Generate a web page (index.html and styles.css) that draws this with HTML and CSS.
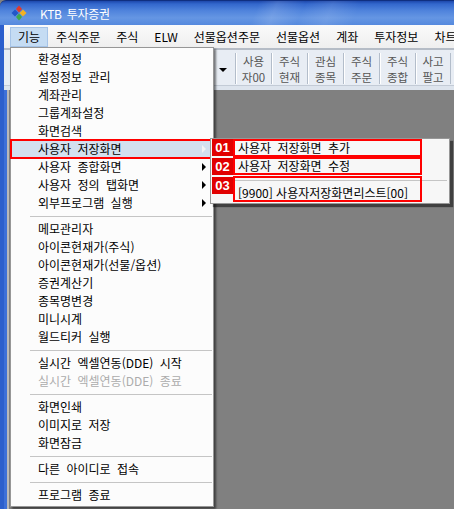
FILE: index.html
```html
<!DOCTYPE html>
<html lang="ko">
<head>
    <meta charset="UTF-8">
    <title>KTB 투자증권</title>
    <link rel="stylesheet" href="styles.css">
</head>
<body>
<div class="window">
    <div class="titlebar">
        <svg class="logo" width="16" height="16" viewBox="0 0 16 16">
            <polygon points="8,0.5 11,4 8,7.5 5,4" fill="#e2392c"/>
            <polygon points="0.5,8 4,4.5 7.5,8 4,11.5" fill="#2257c8"/>
            <polygon points="8.5,8 12,4.5 15.5,8 12,11.5" fill="#f4b223"/>
            <polygon points="8,8.5 11,12 8,15.5 5,12" fill="#3ea84b"/>
        </svg>
        <span class="title">KTB 투자증권</span>
    </div>

    <div class="frame">
        <div class="menubar">
            <span class="menu-top open">기능</span>
            <span class="menu-top">주식주문</span>
            <span class="menu-top">주식</span>
            <span class="menu-top">ELW</span>
            <span class="menu-top">선물옵션주문</span>
            <span class="menu-top">선물옵션</span>
            <span class="menu-top">계좌</span>
            <span class="menu-top">투자정보</span>
            <span class="menu-top">차트</span>
        </div>

        <div class="toolbar">
            <div class="tb-hidden"><span class="drop-arrow"></span></div>
            <div class="tb-btn"><span>사용</span><span>자00</span></div>
            <div class="tb-btn"><span>주식</span><span>현재</span></div>
            <div class="tb-btn"><span>관심</span><span>종목</span></div>
            <div class="tb-btn"><span>주식</span><span>주문</span></div>
            <div class="tb-btn"><span>주식</span><span>종합</span></div>
            <div class="tb-btn"><span>사고</span><span>팔고</span></div>
        </div>
        <div class="tb-strip"></div>

        <div class="mdi"></div>
    </div>

    <!-- 기능 menu, opened -->
    <div class="dropdown">
        <div class="item">환경설정</div>
        <div class="item">설정정보 관리</div>
        <div class="item">계좌관리</div>
        <div class="item">그룹계좌설정</div>
        <div class="item">화면검색</div>
        <div class="item selected">사용자 저장화면 <span class="arrow"></span></div>
        <div class="item">사용자 종합화면 <span class="arrow"></span></div>
        <div class="item">사용자 정의 탭화면 <span class="arrow"></span></div>
        <div class="item">외부프로그램 실행 <span class="arrow"></span></div>
        <div class="sep"></div>
        <div class="item">메모관리자</div>
        <div class="item">아이콘현재가(주식)</div>
        <div class="item">아이콘현재가(선물/옵션)</div>
        <div class="item">증권계산기</div>
        <div class="item">종목명변경</div>
        <div class="item">미니시계</div>
        <div class="item">월드티커 실행</div>
        <div class="sep"></div>
        <div class="item">실시간 엑셀연동(DDE) 시작</div>
        <div class="item disabled">실시간 엑셀연동(DDE) 종료</div>
        <div class="sep"></div>
        <div class="item">화면인쇄</div>
        <div class="item">이미지로 저장</div>
        <div class="item">화면잠금</div>
        <div class="sep"></div>
        <div class="item">다른 아이디로 접속</div>
        <div class="sep"></div>
        <div class="item">프로그램 종료</div>
    </div>

    <!-- 사용자 저장화면 submenu -->
    <div class="submenu">
        <div class="sub-row">
            <span class="badge">01</span>
            <span class="sub-label">사용자 저장화면 추가</span>
        </div>
        <div class="sub-row">
            <span class="badge">02</span>
            <span class="sub-label">사용자 저장화면 수정</span>
        </div>
        <div class="sub-row with-sep">
            <span class="badge">03</span>
            <span class="sub-label tall">[9900] 사용자저장화면리스트[00]</span>
        </div>
    </div>
</div>
</body>
</html>
```

FILE: styles.css
```css
* {
    box-sizing: border-box;
}

body {
    margin: 0;
    width: 454px;
    height: 509px;
    overflow: hidden;
    font-family: "Noto Sans CJK KR", "Noto Sans", sans-serif;
    font-size: 12px;
    color: #000;
    background: #808080;
}

.window {
    position: relative;
    width: 454px;
    height: 509px;
    display: flex;
    flex-direction: column;
}

/* title bar */
.titlebar {
    height: 25px;
    flex: none;
    display: flex;
    align-items: center;
    padding-left: 11px;
    border-top: 1px solid #102f80;
    border-top-left-radius: 6px;
    background:
        linear-gradient(112deg, transparent 56%, rgba(255,255,255,0.13) 60%, transparent 66%, rgba(255,255,255,0.1) 72%, transparent 78%),
        linear-gradient(180deg, #1d48ac 0, #3367cc 3px, #4f83dc 40%, #6596e3 70%, #5589de 100%);
    color: #fff;
}

.logo {
    margin-right: 13px;
}

.title {
    font-size: 12px;
    letter-spacing: -0.3px;
    word-spacing: 2px;
}

.frame {
    flex: 1;
    display: flex;
    flex-direction: column;
    border-left: 4px solid #2c5fcc;
}

/* menu bar */
.menubar {
    height: 23px;
    flex: none;
    display: flex;
    align-items: center;
    padding-left: 6px;
    overflow: hidden;
    background: linear-gradient(#fafafa, #efefef);
}

.menu-top {
    padding: 0 7px;
    line-height: 18px;
    border: 1px solid transparent;
    white-space: nowrap;
}

.menu-top.open {
    background: #c5dcf3;
    border-color: #a6c4e8;
}

/* toolbar */
.toolbar {
    height: 38px;
    flex: none;
    display: flex;
    border-top: 2px solid #b5bcc6;
    border-bottom: 1px solid #c3cbd6;
    background: #e8edf4;
}

.tb-hidden {
    width: 231px;
    display: flex;
    align-items: center;
    justify-content: flex-end;
    padding-right: 8px;
}

.drop-arrow {
    width: 0;
    height: 0;
    margin-top: 5px;
    border-top: 4px solid #000;
    border-left: 4px solid transparent;
    border-right: 4px solid transparent;
}

.tb-btn {
    width: 36px;
    margin: 3px 0 1px;
    display: flex;
    flex-direction: column;
    align-items: center;
    border-left: 1px solid #b3bdca;
    box-shadow: inset 1px 0 #fff;
    font-size: 11.5px;
    line-height: 16px;
    color: #555;
}

.tb-btn:last-child {
    border-right: 1px solid #b3bdca;
}

.tb-strip {
    height: 4px;
    flex: none;
    background: #dde4ed;
}

.mdi {
    flex: 1;
    border-left: 3px solid #3d70d8;
    box-shadow: inset 2px 0 #b9b9b9;
    background: #808080;
}

/* dropdown menu */
.dropdown {
    position: absolute;
    left: 10px;
    top: 47px;
    width: 204px;
    padding: 2px 0;
    border: 1px solid #979797;
    background: #fcfcfc;
    box-shadow: 2px 2px 2px rgba(0, 0, 0, 0.5);
    z-index: 2;
}

.item {
    height: 18px;
    line-height: 18px;
    padding-left: 27px;
    display: flex;
    align-items: center;
    justify-content: space-between;
    white-space: nowrap;
    word-spacing: 3px;
}

.arrow {
    width: 0;
    height: 0;
    margin-right: 7px;
    border-left: 4px solid #000;
    border-top: 4px solid transparent;
    border-bottom: 4px solid transparent;
}

.item.selected {
    background: #d3e0ef;
    box-shadow: inset 0 0 0 1px #8cacd8;
    outline: 2px solid #ff0000;
    outline-offset: -1px;
}

.item.selected .arrow {
    border-left-color: #f4f4f4;
}

.item.disabled {
    color: #acacac;
}

.sep {
    height: 1px;
    margin: 4px 1px 3px 19px;
    background: #c5c5c5;
}

/* submenu */
.submenu {
    position: absolute;
    left: 210px;
    top: 138px;
    width: 240px;
    height: 66px;
    border: 1px solid #979797;
    background: #f7f7f7;
    box-shadow: 3px 3px 1px rgba(0, 0, 0, 0.5);
    z-index: 3;
}

.sub-row {
    display: flex;
    align-items: flex-start;
}

.badge {
    width: 21px;
    height: 17px;
    margin-left: 1px;
    display: flex;
    align-items: center;
    justify-content: center;
    background: #e10000;
    color: #fff;
    font-family: "Liberation Sans", sans-serif;
    font-weight: bold;
    font-size: 13px;
}

.sub-row + .sub-row .badge {
    margin-top: 1px;
}

.sub-label {
    width: 189px;
    height: 18px;
    padding-left: 3px;
    border: 2px solid #ff0000;
    line-height: 14px;
    white-space: nowrap;
    word-spacing: 3px;
}

.sub-row.with-sep {
    margin-top: 1px;
    background: linear-gradient(#c5c5c5, #c5c5c5) no-repeat 24px 4px / 212px 1px;
}

.sub-label.tall {
    height: 26px;
    padding-top: 8px;
    word-spacing: 0;
}
```
